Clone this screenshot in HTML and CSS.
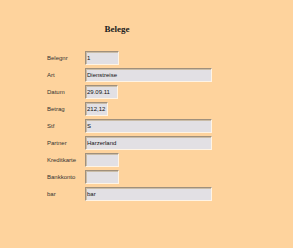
FILE: index.html
```html
<!DOCTYPE html>
<html lang="de">
<head>
    <meta charset="UTF-8">
    <title>Belege</title>
    <link rel="stylesheet" href="styles.css">
</head>
<body>
    <h1 class="title">Belege</h1>
    <div class="form">
        <label>Belegnr</label>
        <input class="short" type="text" value="1">
        <label>Art</label>
        <input class="long" type="text" value="Dienstreise">
        <label>Datum</label>
        <input class="date" type="text" value="29.09.11">
        <label>Betrag</label>
        <input class="amount" type="text" value="212,12">
        <label>Stf</label>
        <input class="long" type="text" value="S">
        <label>Partner</label>
        <input class="long" type="text" value="Harzerland">
        <label>Kreditkarte</label>
        <input class="short" type="text" value="">
        <label>Bankkonto</label>
        <input class="short" type="text" value="">
        <label>bar</label>
        <input class="long" type="text" value="bar">
    </div>
</body>
</html>
```

FILE: styles.css
```css
body {
    margin: 0;
    background-color: #fed39d;
    font-family: "Liberation Sans", sans-serif;
    color: #222;
}
.title {
    margin: 0;
    padding-top: 24px;
    text-align: center;
    width: 234px;
    font-family: "Liberation Serif", serif;
    font-size: 9px;
    font-weight: bold;
    line-height: 10px;
}
.form {
    display: grid;
    grid-template-columns: 38px auto;
    justify-items: start;
    align-items: center;
    row-gap: 3px;
    margin: 17px 0 0 47px;
}
.form label {
    font-size: 6px;
    color: #333;
}
.form input {
    box-sizing: border-box;
    height: 14px;
    margin: 0;
    padding: 0 1px;
    background: #e2e0e4;
    border: 1px solid;
    border-color: #a0907c #fff4e4 #fff4e4 #a0907c;
    box-shadow: inset 1px 1px 0 #c9bca8;
    font-family: "Liberation Sans", sans-serif;
    font-size: 6px;
    color: #111;
    outline: none;
}
.short {
    width: 34px;
}
.date {
    width: 33px;
}
.amount {
    width: 23px;
}
.long {
    width: 127px;
}
```
